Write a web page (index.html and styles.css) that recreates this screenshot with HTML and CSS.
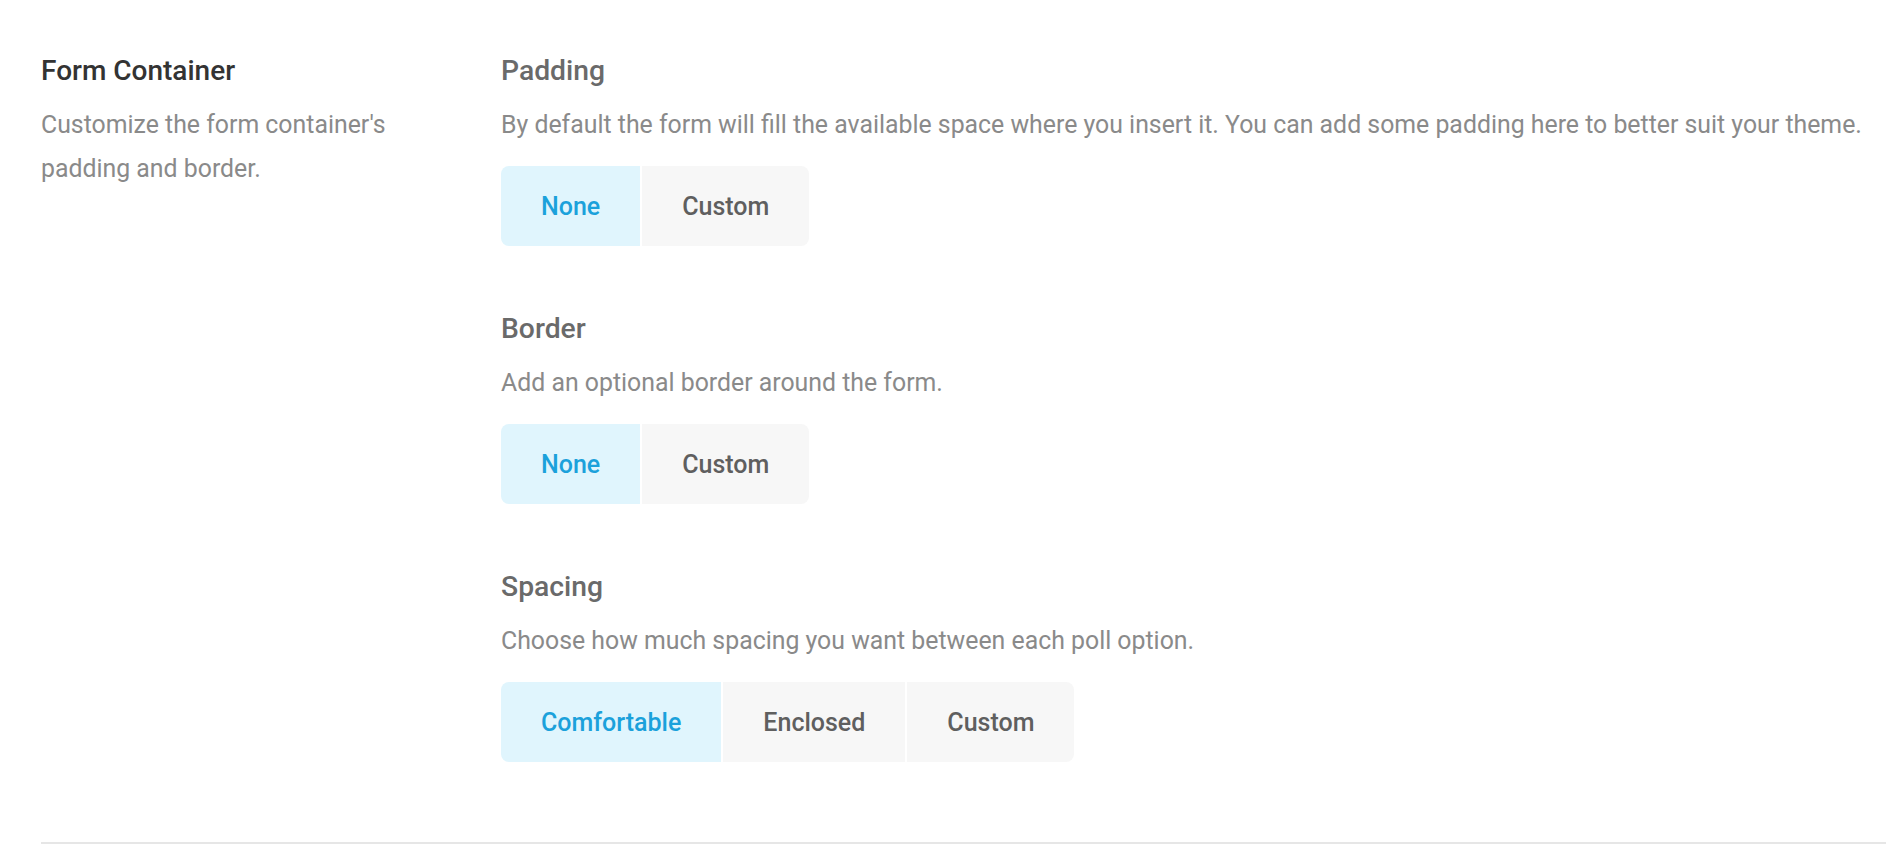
FILE: index.html
```html
<!DOCTYPE html>
<html lang="en">
<head>
<meta charset="utf-8">
<title>Form Container</title>
<link rel="stylesheet" href="styles.css">
</head>
<body>
<section class="settings">
  <div class="intro">
    <h2 class="intro-title">Form Container</h2>
    <p class="intro-text">Customize the form container's padding and border.</p>
  </div>
  <div class="fields">
    <div class="field">
      <h3 class="field-title">Padding</h3>
      <p class="field-text">By default the form will fill the available space where you insert it. You can add some padding here to better suit your theme.</p>
      <div class="segmented">
        <button class="seg seg-active">None</button>
        <button class="seg">Custom</button>
      </div>
    </div>
    <div class="field">
      <h3 class="field-title">Border</h3>
      <p class="field-text">Add an optional border around the form.</p>
      <div class="segmented">
        <button class="seg seg-active">None</button>
        <button class="seg">Custom</button>
      </div>
    </div>
    <div class="field">
      <h3 class="field-title">Spacing</h3>
      <p class="field-text">Choose how much spacing you want between each poll option.</p>
      <div class="segmented">
        <button class="seg seg-active">Comfortable</button>
        <button class="seg">Enclosed</button>
        <button class="seg">Custom</button>
      </div>
    </div>
  </div>
</section>
</body>
</html>
```

FILE: styles.css
```css
* { box-sizing: border-box; }
html, body {
  margin: 0;
  padding: 0;
  background: #ffffff;
  font-family: Roboto, "Noto Sans", "Liberation Sans", sans-serif;
}
.settings {
  display: flex;
  gap: 60px;
  margin-left: 41px;
  padding: 54px 0 80px 0;
  border-bottom: 2px solid #e6e6e6;
}
.intro {
  width: 400px;
  flex: none;
}
.intro-title {
  margin: 0;
  font-size: 28px;
  line-height: 34px;
  font-weight: 500;
  color: #333333;
}
.intro-text {
  margin: 15px 0 0 0;
  font-size: 24.85px;
  line-height: 44px;
  color: #8a8a8a;
}
.fields {
  display: flex;
  flex-direction: column;
  gap: 66px;
}
.field-title {
  margin: 0;
  font-size: 28.3px;
  line-height: 34px;
  font-weight: 500;
  color: #6a6a6a;
}
.field-text {
  margin: 15px 0 0 0;
  font-size: 24.85px;
  line-height: 44px;
  color: #8a8a8a;
  white-space: nowrap;
}
.segmented {
  display: flex;
  gap: 2px;
  margin-top: 19px;
}
.seg {
  height: 80px;
  padding: 0 40px;
  border: none;
  background: #f7f7f7;
  color: #5f5f5f;
  font-family: inherit;
  font-size: 25px;
  font-weight: 500;
  cursor: pointer;
}
.seg:first-child { border-radius: 8px 0 0 8px; }
.seg:last-child { border-radius: 0 8px 8px 0; }
.seg-active {
  background: #e0f5fd;
  color: #1ba1db;
}
```
